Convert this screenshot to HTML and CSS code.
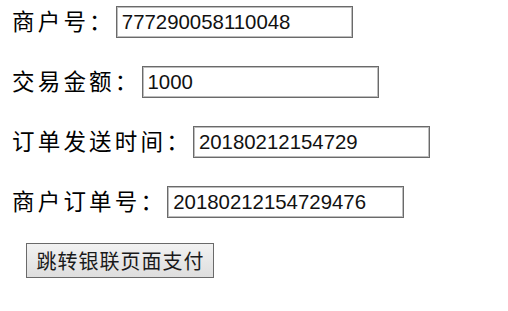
FILE: index.html
```html
<!DOCTYPE html>
<html>
<head>
<meta charset="utf-8">
<link rel="stylesheet" href="styles.css">
</head>
<body>
<form class="pay-form">
  <div class="row"><span class="label">商户号：</span><input class="field" type="text" value="777290058110048"></div>
  <div class="row"><span class="label">交易金额：</span><input class="field" type="text" value="1000"></div>
  <div class="row"><span class="label">订单发送时间：</span><input class="field" type="text" value="20180212154729"></div>
  <div class="row"><span class="label">商户订单号：</span><input class="field" type="text" value="20180212154729476"></div>
  <div class="actions"><button class="submit" type="button">跳转银联页面支付</button></div>
</form>
</body>
</html>
```

FILE: styles.css
```css
html, body {
  margin: 0;
  padding: 0;
  background: #ffffff;
}

body {
  font-family: "Noto Sans CJK SC", "Liberation Sans", sans-serif;
  color: #000000;
}

.pay-form {
  display: flex;
  flex-direction: column;
  gap: 28px;
  padding: 6px 0 0 12px;
}

.row {
  display: flex;
  align-items: center;
  gap: 1px;
  height: 32px;
}

.label {
  font-size: 22.5px;
  font-weight: 400;
  letter-spacing: 3.2px;
  line-height: 32px;
  color: #000000;
  position: relative;
  top: -2px;
}

.field {
  box-sizing: border-box;
  width: 237px;
  height: 32px;
  margin: 0;
  padding: 0 5px;
  border: 1px solid #6a6a6a;
  box-shadow: inset 0 0 0 1px #bdbdbd;
  background: #ffffff;
  font-family: "Liberation Sans", Arial, sans-serif;
  font-size: 20.4px;
  color: #111111;
  outline: none;
}

.actions {
  display: flex;
  padding-left: 14px;
  margin-top: -3px;
}

.submit {
  box-sizing: border-box;
  width: 188px;
  height: 35px;
  margin: 0;
  padding: 0 0 0 1px;
  border: 1px solid #6a6a6a;
  border-radius: 0;
  background: linear-gradient(#f2f2f2, #dedede);
  font-family: "Noto Sans CJK SC", sans-serif;
  font-size: 20px;
  font-weight: 400;
  letter-spacing: 1px;
  color: #1a1a1a;
  line-height: 33px;
}
```
